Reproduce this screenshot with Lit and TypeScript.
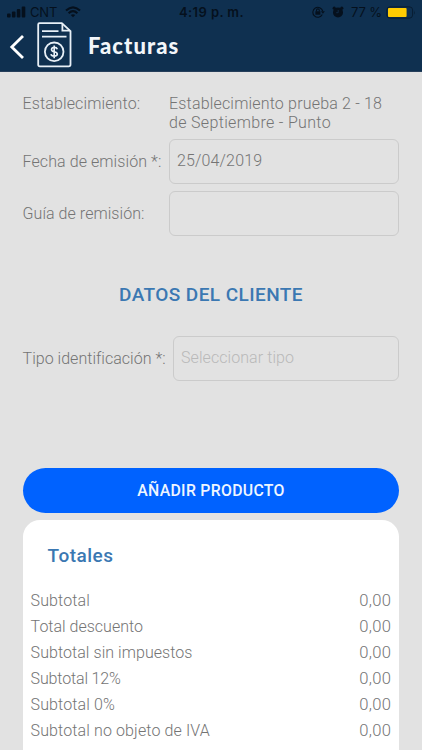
import { LitElement, html, css } from "lit";
import { customElement } from "lit/decorators.js";

const TOTALS: Array<[string, string, string]> = [
  ["Subtotal", "0,00", "t1"],
  ["Total descuento", "0,00", "t2"],
  ["Subtotal sin impuestos", "0,00", "t3"],
  ["Subtotal 12%", "0,00", "t4"],
  ["Subtotal 0%", "0,00", "t5"],
  ["Subtotal no objeto de IVA", "0,00", "t6"],
];

@customElement("status-bar")
class StatusBar extends LitElement {
  static styles = css`
    :host { display: grid; grid-template-columns: 1fr auto 1fr; align-items: center; height: 24px;
      padding: 0 6px 0 7px; font: 400 13px/24px Inter, "Liberation Sans", sans-serif; color: #05101d; }
    .side { display: flex; align-items: center; }
    .right { justify-content: flex-end; }
    .carrier { margin: 0 8px 0 4px; letter-spacing: -0.2px; }
    .time { font-weight: 600; letter-spacing: 0.4px; }
    .lock { margin-right: 7px; }
    .alarm { margin-right: 7px; }
    .pct { margin-right: 4px; white-space: nowrap; letter-spacing: -0.1px; }
    svg { display: block; flex: none; }
  `;
  render() {
    return html`
      <div class="side">
        <svg width="19" height="12" viewBox="0 0 19 12" fill="#05101d">
          <rect x="0" y="7.5" width="3.6" height="4" rx="1" /><rect x="4.9" y="5.5" width="3.6" height="6" rx="1" />
          <rect x="9.8" y="3" width="3.6" height="8.5" rx="1" /><rect x="14.7" y="0.6" width="3.6" height="10.9" rx="1" />
        </svg>
        <span class="carrier">CNT</span>
        <svg width="16" height="12" viewBox="0 0 16 12" fill="none" stroke="#05101d" stroke-width="2.1">
          <path d="M1 4.6Q8-2 15 4.6" /><path d="M3.6 7.2Q8 3.2 12.4 7.2" />
          <path d="M5.8 9.1Q8 7.2 10.2 9.1L8 11.3Z" fill="#05101d" stroke="none" />
        </svg>
      </div>
      <span class="time">4:19 p. m.</span>
      <div class="side right">
        <svg class="lock" width="13" height="12" viewBox="0 0 13 12" fill="none" stroke="#05101d" stroke-width="1.1">
          <path d="M10.3 8.6A5 5 0 1 1 10.7 5" /><path d="M8.9 5.2h4l-2 2.6z" fill="#05101d" stroke="none" />
          <rect x="3.4" y="5.3" width="5" height="3.4" fill="#05101d" stroke="none" />
          <path d="M4.5 5.5V4.3a1.4 1.4 0 0 1 2.8 0v1.2" />
        </svg>
        <svg class="alarm" width="12" height="12" viewBox="0 0 12 12" fill="#05101d">
          <circle cx="6" cy="6.4" r="5" /><circle cx="2.2" cy="2.2" r="1.6" /><circle cx="9.8" cy="2.2" r="1.6" />
          <path d="M6.2 4v2.7H4.2" fill="none" stroke="#12304f" stroke-width="0.8" />
        </svg>
        <span class="pct">77 %</span>
        <svg width="30" height="13" viewBox="0 0 30 13">
          <rect x="0.9" y="0.9" width="25.7" height="11.2" rx="3" fill="none" stroke="#081d32" stroke-width="1" />
          <rect x="2" y="2" width="18.6" height="9" rx="1" fill="#ffcc02" />
          <path d="M28 4.5q1.4 2 0 4z" fill="#081d32" />
        </svg>
      </div>`;
  }
}

@customElement("app-root")
export class AppRoot extends LitElement {
  static styles = css`
    :host { display: flex; flex-direction: column; height: 750px; overflow: hidden; background: #e2e2e2;
      color: #747474; font: 300 16px/18.7px Roboto, "Open Sans", sans-serif; }
    * { box-sizing: border-box; }
    header { flex: none; height: 72px; background: #0f3050; border-bottom: 1px solid #263f5b; }
    .nav { display: flex; align-items: center; height: 46px; padding: 0 0 3px 9px; }
    .nav svg { display: block; flex: none; }
    .back { margin-top: 3px; }
    .doc { margin: -1px 0 0 12px; }
    h1 { margin: 0 0 0 16px; font: 900 22px/28px Lato, sans-serif; color: #f2f6fa; letter-spacing: 1.05px; }
    main { flex: 1; display: flex; flex-direction: column; min-height: 0; padding: 23px 22.6px 0; }
    .row { display: flex; flex: none; align-items: center; white-space: nowrap; }
    .first { align-items: flex-start; height: 44px; }
    .label { flex: none; width: 146.4px; }
    .row:not(.first) .label { padding-top: 1.6px; }
    .field { flex: 1; height: 45px; border: 1.5px solid #cbcbcb; border-radius: 6px; padding: 0 7px;
      line-height: 42px; }
    .gap { margin-top: 7px; }
    .a1 { letter-spacing: 0.12px; } .a2 { letter-spacing: 0.18px; } .a3 { letter-spacing: 0.33px; }
    .a4 { letter-spacing: 0.08px; } .a5 { letter-spacing: 0.15px; } .a6 { letter-spacing: 0.05px; }
    .a7 { letter-spacing: 0.02px; }
    .wide .label { width: 150.4px; }
    .hint { color: #b9b9b9; letter-spacing: 0.07px; }
    h2 { flex: none; margin: 0; text-align: center; font: 500 19px/24px Roboto, sans-serif; color: #3b78b2; letter-spacing: 0.42px; }
    .client { margin: 47px 0 29px; }
    button { flex: none; height: 45px; margin: 87px 0 7px; padding: 1px 0 0; border: 0; border-radius: 23px; background: #0062ff;
      color: #eff6ff; font: 500 15.8px/44px Roboto, sans-serif; letter-spacing: 0.3px; }
    .card { flex: 1; min-height: 0; border-radius: 17px 17px 0 0; background: #fff; padding: 24px 8px 0; }
    .card h2 { text-align: left; padding-left: 17px; margin-bottom: 20.3px; letter-spacing: 0.5px; }
    .total { display: flex; justify-content: space-between; height: 25.87px; line-height: 25.87px; }
    .t1 { letter-spacing: 0.1px; } .t2 { letter-spacing: 0; } .t3 { letter-spacing: 0.06px; }
    .t4 { letter-spacing: -0.15px; } .t5 { letter-spacing: 0.12px; } .t6 { letter-spacing: 0.12px; }
    .value { font-size: 16.6px; letter-spacing: 0.35px; }
  `;
  render() {
    return html`
      <header>
        <status-bar></status-bar>
        <div class="nav">
          <svg class="back" width="16" height="26" viewBox="0 0 16 26" fill="none" stroke="#fff" stroke-width="2.8"><path d="M14 2L2.8 13L14 24" /></svg>
          <svg class="doc" width="35" height="46" viewBox="0 0 35 46" fill="none" stroke="#e8f0f7" stroke-width="1.8">
            <path d="M2.5 1.2h22.3l8.7 8v33.3q0 1.8-1.8 1.8H2.7q-1.5 0-1.5-1.5V2.5q0-1.3 1.3-1.3z" />
            <path d="M25.4 1.5v7.2h7.6" /><path d="M5 9.2h16.5M5 14.6h24.5" />
            <circle cx="17.2" cy="29.8" r="9.3" />
            <path d="M20.3 27.2q-.5-1.8-3-1.8t-2.8 2q0 1.8 2.8 2.3t3 2.4q-.2 2-3.1 2t-3.2-2M17.2 23.6v12.6" stroke-width="1.6" />
          </svg>
          <h1>Facturas</h1>
        </div>
      </header>
      <main>
        <div class="row first"><span class="label a1">Establecimiento:</span><span class="a2">Establecimiento prueba 2 - 18<br /><span class="a3">de Septiembre - Punto</span></span></div>
        <div class="row"><span class="label a4">Fecha de emisión *:</span><div class="field a5">25/04/2019</div></div>
        <div class="row gap"><span class="label a6">Guía de remisión:</span><div class="field"></div></div>
        <h2 class="client">DATOS DEL CLIENTE</h2>
        <div class="row wide"><span class="label a7">Tipo identificación *:</span><div class="field hint">Seleccionar tipo</div></div>
        <button>AÑADIR PRODUCTO</button>
        <section class="card">
          <h2>Totales</h2>
          ${TOTALS.map(([name, value, cls]) => html`<div class="total"><span class=${cls}>${name}</span><span class="value">${value}</span></div>`)}
        </section>
      </main>`;
  }
}
